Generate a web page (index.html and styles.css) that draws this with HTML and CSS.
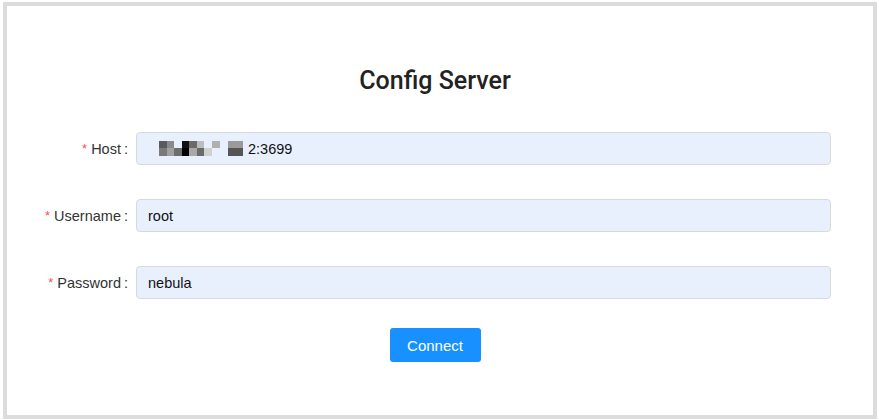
FILE: index.html
```html
<!DOCTYPE html>
<html>
<head>
<meta charset="utf-8">
<link rel="stylesheet" href="styles.css">
</head>
<body>
<div class="frame">
  <div class="panel">
    <h1 class="title">Config Server</h1>
    <div class="form">
      <div class="row">
        <label class="label"><span class="req">*</span>Host<span class="colon">:</span></label>
        <div class="input">
          <svg class="mosaic" width="85" height="15" viewBox="0 0 85 15" aria-hidden="true">
            <rect x="0" y="0" width="8" height="7" fill="#5a5a5a"/>
            <rect x="8" y="0" width="7" height="7" fill="#8a8a8a"/>
            <rect x="23" y="0" width="7" height="7" fill="#111"/>
            <rect x="30" y="0" width="8" height="7" fill="#6a6a6a"/>
            <rect x="38" y="0" width="7" height="7" fill="#bdbdbd"/>
            <rect x="53" y="0" width="8" height="7" fill="#b0b0b0"/>
            <rect x="0" y="7" width="8" height="8" fill="#7a7a7a"/>
            <rect x="8" y="7" width="7" height="8" fill="#a0a0a0"/>
            <rect x="15" y="7" width="8" height="8" fill="#6e6e6e"/>
            <rect x="23" y="7" width="7" height="8" fill="#000"/>
            <rect x="30" y="7" width="8" height="8" fill="#a8a8a8"/>
            <rect x="38" y="7" width="7" height="8" fill="#6a6a6a"/>
            <rect x="45" y="7" width="8" height="8" fill="#d0d0d0"/>
            <rect x="69" y="0" width="15" height="7" fill="#9a9a9a"/>
            <rect x="69" y="7" width="15" height="8" fill="#555"/>
          </svg>
          <span class="port">2:3699</span>
        </div>
      </div>
      <div class="row">
        <label class="label"><span class="req">*</span>Username<span class="colon">:</span></label>
        <div class="input">root</div>
      </div>
      <div class="row">
        <label class="label"><span class="req">*</span>Password<span class="colon">:</span></label>
        <div class="input">nebula</div>
      </div>
      <div class="actions">
        <button class="btn" type="button">Connect</button>
      </div>
    </div>
  </div>
</div>
</body>
</html>
```

FILE: styles.css
```css
html, body {
  margin: 0;
  padding: 0;
  background: #fff;
}
body {
  font-family: "Liberation Sans", Arial, sans-serif;
  color: rgba(0, 0, 0, 0.85);
}
.frame {
  margin: 2px 2px 0 3px;
  height: 417px;
  box-sizing: border-box;
  border: 4px solid #dcdcdc;
}
.panel {
  width: 856px;
  display: flex;
  flex-direction: column;
}
.title {
  margin: 59px 0 0 0;
  font-family: Roboto, "Liberation Sans", sans-serif;
  font-weight: 500;
  font-size: 25px;
  line-height: 32px;
  text-align: center;
  color: #222;
}
.form {
  margin-top: 35px;
  display: flex;
  flex-direction: column;
}
.row {
  display: flex;
  align-items: center;
  margin-bottom: 34px;
}
.label {
  width: 129px;
  flex: none;
  display: flex;
  justify-content: flex-end;
  align-items: center;
  font-size: 14.5px;
  color: #333;
}
.req {
  color: #ff4d4f;
  margin-right: 4px;
  font-size: 13px;
}
.colon {
  margin: 0 8px 0 3px;
}
.input {
  width: 695px;
  height: 33px;
  box-sizing: border-box;
  padding: 0 11px;
  display: flex;
  align-items: center;
  background: #e8f0fe;
  border: 1px solid #d9d9d9;
  border-radius: 4px;
  font-size: 14.5px;
  color: #111;
}
.mosaic {
  margin-left: 11px;
  margin-right: 4px;
  flex: none;
}
.port {
  white-space: nowrap;
}
.actions {
  display: flex;
  justify-content: center;
  margin-top: -5px;
}
.btn {
  width: 91px;
  height: 34px;
  border: none;
  border-radius: 3px;
  background: #1890ff;
  color: #fff;
  font-family: "Liberation Sans", Arial, sans-serif;
  font-size: 15px;
  cursor: pointer;
}
```
